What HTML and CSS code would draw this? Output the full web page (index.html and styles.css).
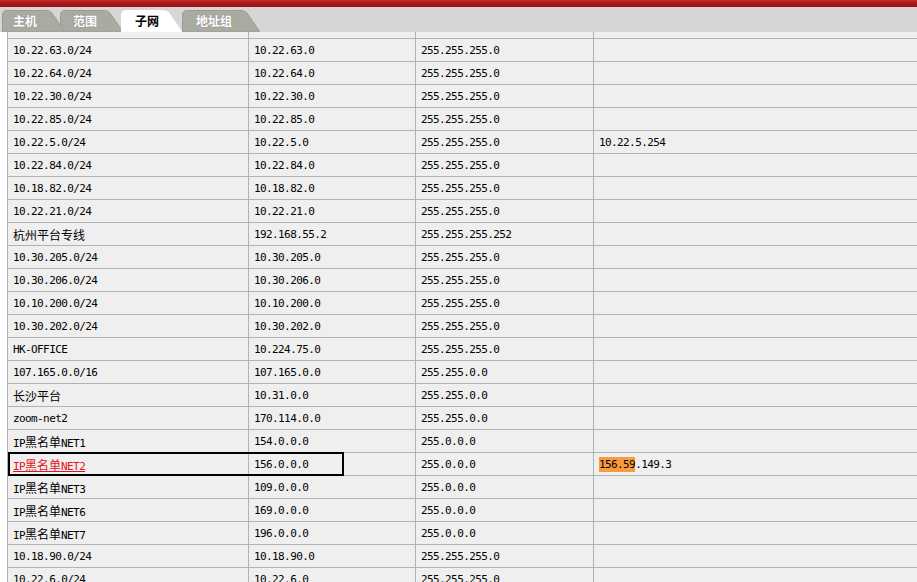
FILE: index.html
```html
<!DOCTYPE html>
<html lang="zh-CN">
<head>
<meta charset="utf-8">
<title>子网</title>
<link rel="stylesheet" href="styles.css">
</head>
<body>
<div class="topbar"></div>
<div class="tabbar">
  <div class="tab tab-1">
    <svg class="tab-shape" width="63" height="22" viewBox="0 0 63 22"><path d="M0.5,22 V5 Q0.5,0.5 5,0.5 H44 Q48,0.5 50,3 L63,22 Z"/></svg>
    <span class="tab-label">主机</span>
  </div>
  <div class="tab tab-2">
    <svg class="tab-shape" width="63" height="22" viewBox="0 0 63 22"><path d="M0.5,22 V5 Q0.5,0.5 5,0.5 H44 Q48,0.5 50,3 L63,22 Z"/></svg>
    <span class="tab-label">范围</span>
  </div>
  <div class="tab tab-3 active">
    <svg class="tab-shape" width="61" height="22" viewBox="0 0 61 22"><path d="M0.5,22 V5 Q0.5,0.5 5,0.5 H42 Q46,0.5 48,3 L61,22 Z"/></svg>
    <span class="tab-label">子网</span>
  </div>
  <div class="tab tab-4">
    <svg class="tab-shape" width="78" height="22" viewBox="0 0 78 22"><path d="M0.5,22 V5 Q0.5,0.5 5,0.5 H59 Q63,0.5 65,3 L78,22 Z"/></svg>
    <span class="tab-label">地址组</span>
  </div>
</div>
<div class="grid-wrap">
  <table class="grid">
    <colgroup><col class="c1"><col class="c2"><col class="c3"><col class="c4"></colgroup>
    <tbody>
      <tr><td></td><td></td><td></td><td></td></tr>
      <tr><td>10.22.63.0/24</td><td>10.22.63.0</td><td>255.255.255.0</td><td></td></tr>
      <tr><td>10.22.64.0/24</td><td>10.22.64.0</td><td>255.255.255.0</td><td></td></tr>
      <tr><td>10.22.30.0/24</td><td>10.22.30.0</td><td>255.255.255.0</td><td></td></tr>
      <tr><td>10.22.85.0/24</td><td>10.22.85.0</td><td>255.255.255.0</td><td></td></tr>
      <tr><td>10.22.5.0/24</td><td>10.22.5.0</td><td>255.255.255.0</td><td>10.22.5.254</td></tr>
      <tr><td>10.22.84.0/24</td><td>10.22.84.0</td><td>255.255.255.0</td><td></td></tr>
      <tr><td>10.18.82.0/24</td><td>10.18.82.0</td><td>255.255.255.0</td><td></td></tr>
      <tr><td>10.22.21.0/24</td><td>10.22.21.0</td><td>255.255.255.0</td><td></td></tr>
      <tr><td><span class="cj">杭州平台专线</span></td><td>192.168.55.2</td><td>255.255.255.252</td><td></td></tr>
      <tr><td>10.30.205.0/24</td><td>10.30.205.0</td><td>255.255.255.0</td><td></td></tr>
      <tr><td>10.30.206.0/24</td><td>10.30.206.0</td><td>255.255.255.0</td><td></td></tr>
      <tr><td>10.10.200.0/24</td><td>10.10.200.0</td><td>255.255.255.0</td><td></td></tr>
      <tr><td>10.30.202.0/24</td><td>10.30.202.0</td><td>255.255.255.0</td><td></td></tr>
      <tr><td>HK-OFFICE</td><td>10.224.75.0</td><td>255.255.255.0</td><td></td></tr>
      <tr><td>107.165.0.0/16</td><td>107.165.0.0</td><td>255.255.0.0</td><td></td></tr>
      <tr><td><span class="cj">长沙平台</span></td><td>10.31.0.0</td><td>255.255.0.0</td><td></td></tr>
      <tr><td>zoom-net2</td><td>170.114.0.0</td><td>255.255.0.0</td><td></td></tr>
      <tr><td>IP<span class="cj">黑名单</span>NET1</td><td>154.0.0.0</td><td>255.0.0.0</td><td></td></tr>
      <tr><td><a class="link" href="#">IP<span class="cj">黑名单</span>NET2</a></td><td>156.0.0.0</td><td>255.0.0.0</td><td><mark class="hit">156.59</mark>.149.3</td></tr>
      <tr><td>IP<span class="cj">黑名单</span>NET3</td><td>109.0.0.0</td><td>255.0.0.0</td><td></td></tr>
      <tr><td>IP<span class="cj">黑名单</span>NET6</td><td>169.0.0.0</td><td>255.0.0.0</td><td></td></tr>
      <tr><td>IP<span class="cj">黑名单</span>NET7</td><td>196.0.0.0</td><td>255.0.0.0</td><td></td></tr>
      <tr><td>10.18.90.0/24</td><td>10.18.90.0</td><td>255.255.255.0</td><td></td></tr>
      <tr><td>10.22.6.0/24</td><td>10.22.6.0</td><td>255.255.255.0</td><td></td></tr>
    </tbody>
  </table>
  <div class="focus-box"></div>
</div>
</body>
</html>
```
FILE: styles.css
```css
html, body {
  margin: 0;
  padding: 0;
  background: #ffffff;
}
body {
  width: 917px;
  height: 582px;
  overflow: hidden;
  font-family: "DejaVu Sans Mono", "Liberation Mono", "Noto Sans CJK SC", monospace;
}
.topbar {
  height: 7px;
  background: linear-gradient(#cf3333 0, #c02222 1px, #a81818 3px, #9a1212 7px);
}
.tabbar {
  height: 25px;
  background: #d6d6d6;
  display: flex;
  align-items: flex-end;
  padding-left: 2px;
}
.tab {
  display: grid;
  height: 22px;
  position: relative;
}
.tab-shape, .tab-label {
  grid-area: 1 / 1;
}
.tab-shape path {
  fill: #a9aba3;
  stroke: #9a9c95;
  stroke-width: 1;
}
.tab-label {
  align-self: center;
  font-family: "Noto Sans CJK SC", sans-serif;
  font-weight: 700;
  font-size: 12px;
  line-height: 14px;
  color: #ffffff;
  text-shadow: 0 0 1px rgba(90, 90, 110, 0.5);
}
.tab-1 { z-index: 3; }
.tab-1 .tab-label { padding-left: 11px; }
.tab-2 { z-index: 2; margin-left: -5px; }
.tab-2 .tab-label { padding-left: 13px; }
.tab-3 { z-index: 4; margin-left: -2px; }
.tab-3 .tab-label { padding-left: 14px; }
.tab-4 { z-index: 1; }
.tab-4 .tab-label { padding-left: 14px; }
.tab.active .tab-shape path {
  fill: #ffffff;
  stroke: #ffffff;
}
.tab.active .tab-label {
  color: #000000;
  text-shadow: none;
}
.grid-wrap {
  position: relative;
  height: 550px;
  overflow: hidden;
  padding-left: 7px;
}
.grid {
  border-collapse: collapse;
  table-layout: fixed;
  width: 910px;
  margin-top: -17px;
  background: #efefef;
}
.c1 { width: 241px; }
.c2 { width: 167px; }
.c3 { width: 178px; }
.c4 { width: 324px; }
.grid td {
  border: 1px solid #b2b2b2;
  height: 23px;
  padding: 0 0 0 5px;
  font-size: 11px;
  letter-spacing: -0.6px;
  color: #000000;
  white-space: nowrap;
  vertical-align: middle;
  box-sizing: border-box;
}
.cj {
  font-family: "Noto Sans CJK SC", sans-serif;
  font-size: 12px;
  letter-spacing: 0;
}
.link {
  color: #e3121c;
  text-decoration: underline;
  text-underline-offset: 1px;
}
.hit {
  background: #fb9a3c;
  color: #000000;
  padding: 1px 0;
}
.focus-box {
  position: absolute;
  left: 8px;
  top: 420px;
  width: 336px;
  height: 24px;
  border: 2px solid #000000;
  box-sizing: border-box;
}
```
